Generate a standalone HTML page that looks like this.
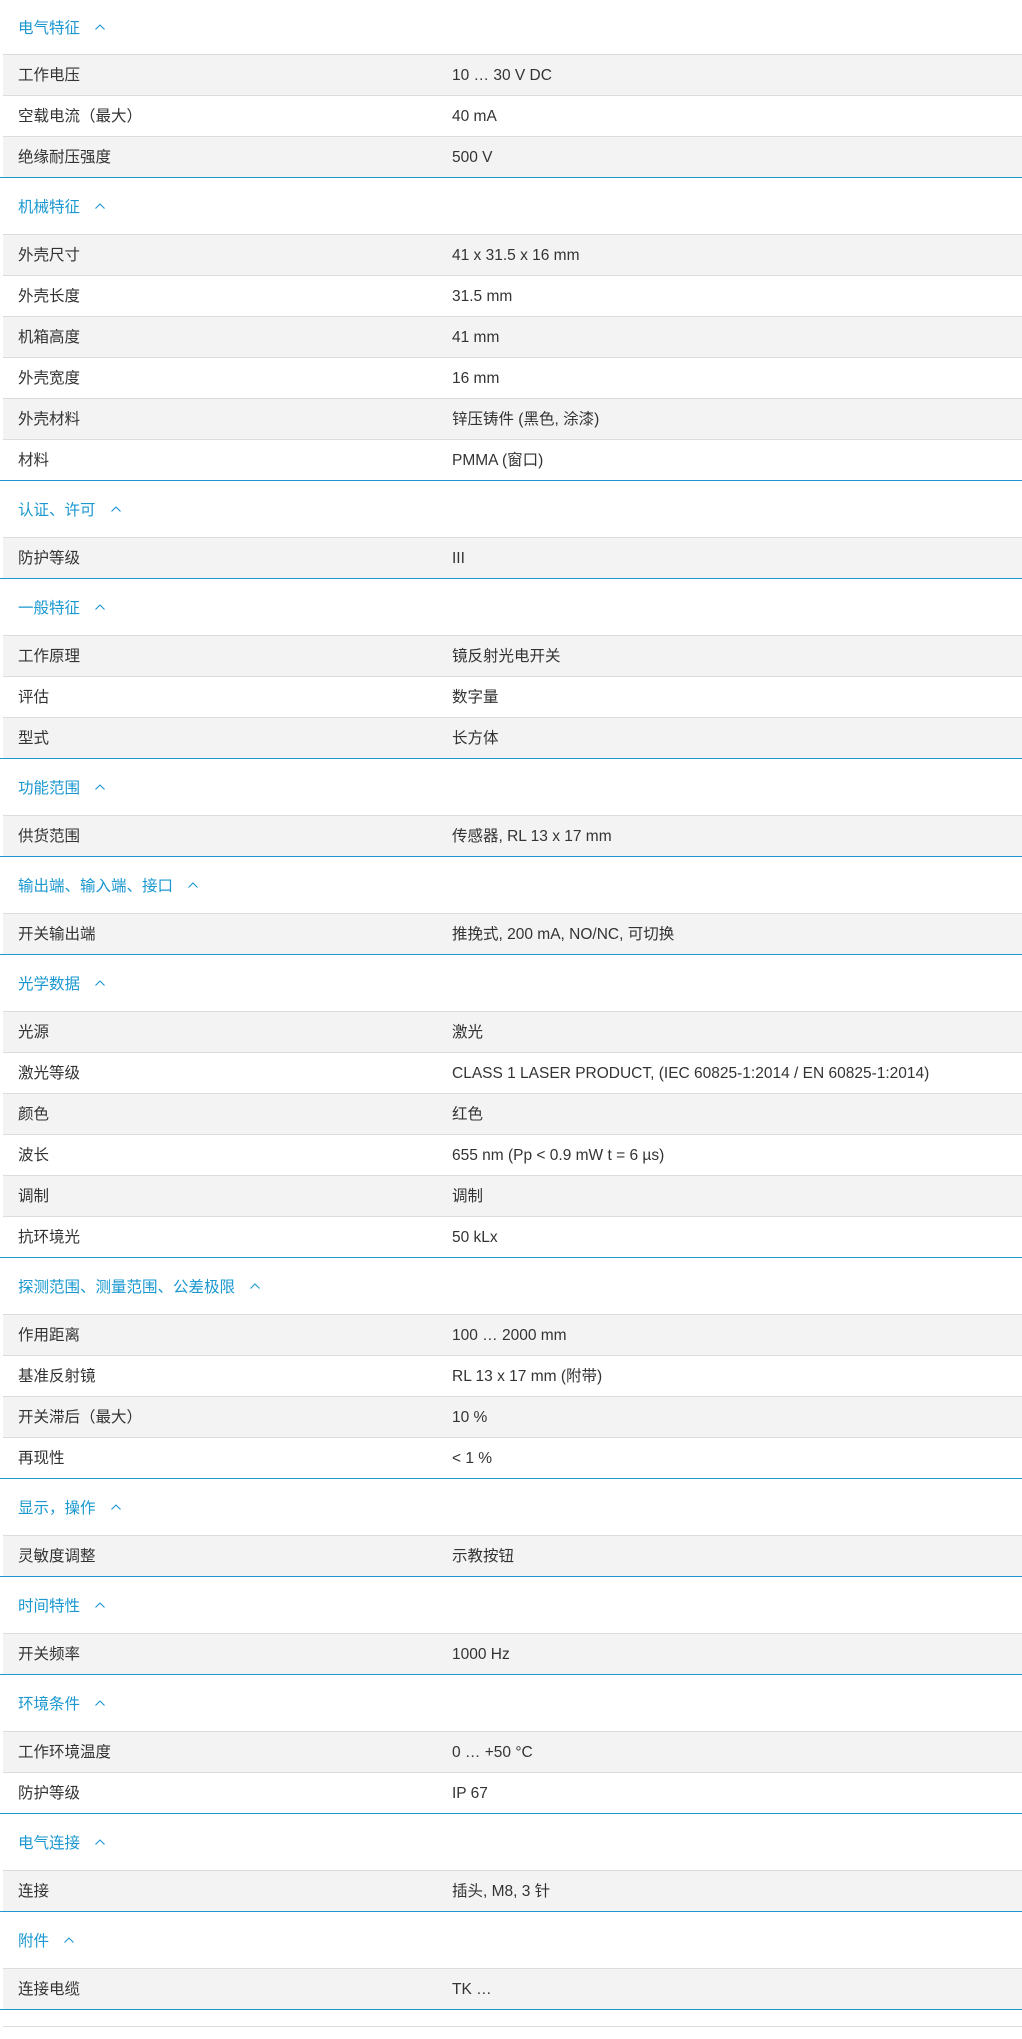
<!DOCTYPE html>
<html><head><meta charset="utf-8"><style>
*{margin:0;padding:0;box-sizing:border-box}
body{width:1022px;height:2039px;background:#fff;font-family:"Liberation Sans","Noto Sans CJK SC",sans-serif;font-size:15.5px;color:#333;overflow:hidden}
.h{height:56px;display:flex;align-items:center;padding-left:18px;color:#1b98d0;font-size:15.5px}
.h.first{height:54px}
.h svg{margin-left:14px}
.r{height:41px;border-top:1px solid #dcdcdc;margin-left:3px;position:relative}
.r span{position:absolute;left:15px;top:1px;height:40px;line-height:40px;white-space:nowrap}
.r span+span{left:449px}
.sec{border-bottom:1px solid #1b98d0}
.rows .r:nth-child(odd){background:#f3f3f3}
.rows .r:nth-child(even){background:#fff}
.end{margin-top:16px;border-top:1px solid #dcdcdc;margin-left:3px}
</style></head><body>
<div id="c"></div>
<script>
const d=[
["电气特征",[["工作电压","10 … 30 V DC"],["空载电流（最大）","40 mA"],["绝缘耐压强度","500 V"]]],
["机械特征",[["外壳尺寸","41 x 31.5 x 16 mm"],["外壳长度","31.5 mm"],["机箱高度","41 mm"],["外壳宽度","16 mm"],["外壳材料","锌压铸件 (黑色, 涂漆)"],["材料","PMMA (窗口)"]]],
["认证、许可",[["防护等级","III"]]],
["一般特征",[["工作原理","镜反射光电开关"],["评估","数字量"],["型式","长方体"]]],
["功能范围",[["供货范围","传感器, RL 13 x 17 mm"]]],
["输出端、输入端、接口",[["开关输出端","推挽式, 200 mA, NO/NC, 可切换"]]],
["光学数据",[["光源","激光"],["激光等级","CLASS 1 LASER PRODUCT, (IEC 60825-1:2014 / EN 60825-1:2014)"],["颜色","红色"],["波长","655 nm (Pp < 0.9 mW t = 6 µs)"],["调制","调制"],["抗环境光","50 kLx"]]],
["探测范围、测量范围、公差极限",[["作用距离","100 … 2000 mm"],["基准反射镜","RL 13 x 17 mm (附带)"],["开关滞后（最大）","10 %"],["再现性","< 1 %"]]],
["显示，操作",[["灵敏度调整","示教按钮"]]],
["时间特性",[["开关频率","1000 Hz"]]],
["环境条件",[["工作环境温度","0 … +50 °C"],["防护等级","IP 67"]]],
["电气连接",[["连接","插头, M8, 3 针"]]],
["附件",[["连接电缆","TK …"]]]];
const esc=s=>s.replace(/&/g,"&amp;").replace(/</g,"&lt;");
let h="";d.forEach((s,i)=>{h+=`<div class="h${i?"":" first"}">${s[0]}<svg width="12" height="8" viewBox="0 0 12 8"><polyline points="1.5,6.5 6,2 10.5,6.5" fill="none" stroke="#1b98d0" stroke-width="1.1"/></svg></div><div class="sec rows">`;s[1].forEach(r=>{h+=`<div class="r"><span>${esc(r[0])}</span><span>${esc(r[1])}</span></div>`});h+="</div>"});
h+='<div class="end"></div>';
document.getElementById("c").innerHTML=h;
</script>
</body></html>
